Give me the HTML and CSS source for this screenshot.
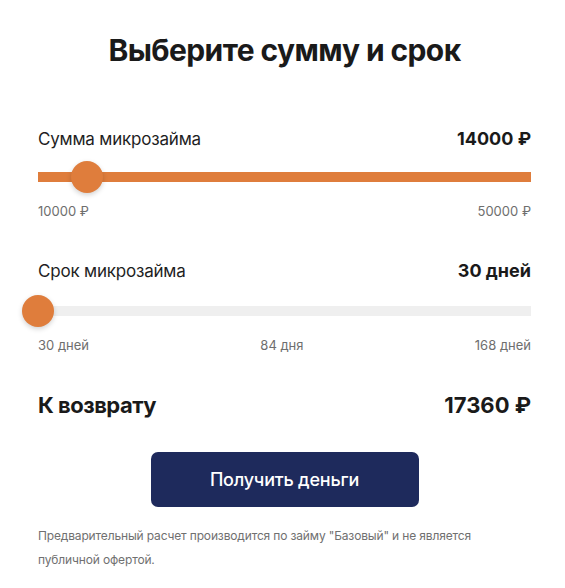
FILE: index.html
```html
<!DOCTYPE html>
<html lang="ru">
<head>
<meta charset="utf-8">
<title>Выберите сумму и срок</title>
<link rel="stylesheet" href="styles.css">
</head>
<body>
<main class="calc">
  <h1 class="calc-title">Выберите сумму и срок</h1>

  <section class="field field-amount">
    <div class="field-head">
      <span class="field-label">Сумма микрозайма</span>
      <span class="field-value">14000 ₽</span>
    </div>
    <div class="slider">
      <div class="slider-track slider-track-filled"></div>
      <div class="slider-thumb" style="left: 10%"></div>
    </div>
    <div class="slider-scale">
      <span>10000 ₽</span>
      <span>50000 ₽</span>
    </div>
  </section>

  <section class="field field-term">
    <div class="field-head">
      <span class="field-label">Срок микрозайма</span>
      <span class="field-value">30 дней</span>
    </div>
    <div class="slider">
      <div class="slider-track"></div>
      <div class="slider-thumb" style="left: 0%"></div>
    </div>
    <div class="slider-scale">
      <span>30 дней</span>
      <span>84 дня</span>
      <span>168 дней</span>
    </div>
  </section>

  <div class="total">
    <span class="total-label">К возврату</span>
    <span class="total-value">17360 ₽</span>
  </div>

  <div class="actions">
    <button class="btn-primary" type="button">Получить деньги</button>
  </div>

  <p class="disclaimer">Предварительный расчет производится по займу "Базовый" и не является публичной офертой.</p>
</main>
</body>
</html>
```

FILE: styles.css
```css
* { box-sizing: border-box; }

html, body {
  margin: 0;
  padding: 0;
  background: #ffffff;
}

body {
  font-family: Inter, "Noto Sans", "DejaVu Sans", sans-serif;
  color: #1c1c1c;
}

.calc {
  width: 493px;
  margin-left: 38px;
  padding-top: 30px;
  display: flex;
  flex-direction: column;
}

.calc-title {
  margin: 0;
  font-size: 30px;
  line-height: 40px;
  font-weight: 700;
  letter-spacing: -0.6px;
  text-align: center;
  color: #1a1a1a;
}

.field-amount { margin-top: 57px; }
.field-term { margin-top: 39px; }

.field-head {
  display: flex;
  justify-content: space-between;
  align-items: baseline;
  line-height: 24px;
}

.field-label {
  font-size: 17px;
  font-weight: 400;
  letter-spacing: -0.2px;
  color: #1f1f1f;
}

.field-value {
  font-size: 18px;
  font-weight: 700;
  color: #1a1a1a;
}

.slider {
  position: relative;
  height: 32px;
  margin-top: 10px;
  display: flex;
  align-items: center;
}

.field-term .slider { margin-top: 12px; }

.slider-track {
  width: 100%;
  height: 10px;
  background: #efefef;
}

.slider-track-filled { background: #df7d3c; }

.slider-thumb {
  position: absolute;
  top: 0;
  width: 32px;
  height: 32px;
  margin-left: -16px;
  border-radius: 50%;
  background: #df7d3c;
  box-shadow: 0 2px 5px rgba(0, 0, 0, 0.18);
}

.slider-scale {
  margin-top: 9px;
  display: flex;
  justify-content: space-between;
  font-size: 13px;
  line-height: 18px;
  color: #6e6e6e;
}

.total {
  margin-top: 37px;
  display: flex;
  justify-content: space-between;
  align-items: baseline;
  line-height: 28px;
  font-size: 22px;
  font-weight: 700;
  color: #1a1a1a;
}

.total-label { letter-spacing: -0.5px; }

.actions {
  margin-top: 33px;
  display: flex;
  justify-content: center;
}

.btn-primary {
  width: 268px;
  height: 55px;
  border: 0;
  border-radius: 7px;
  background: #1e2a5c;
  color: #ffffff;
  font-family: inherit;
  font-size: 18px;
  font-weight: 500;
  letter-spacing: -0.2px;
  cursor: pointer;
}

.disclaimer {
  margin: 17px 0 0;
  font-size: 12px;
  line-height: 24px;
  letter-spacing: -0.15px;
  color: #707070;
  max-width: 462px;
}
```
